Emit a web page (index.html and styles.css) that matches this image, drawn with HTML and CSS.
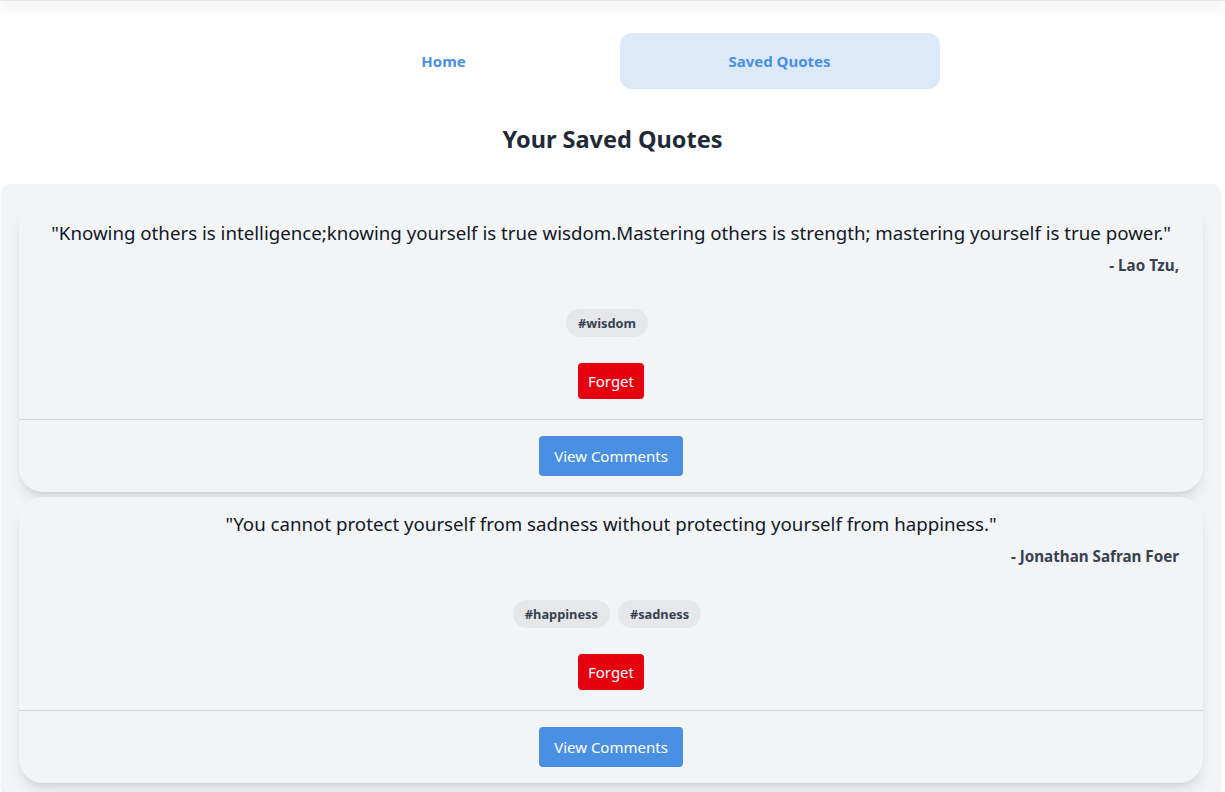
FILE: index.html
```html
<!DOCTYPE html>
<html lang="en">
<head>
<meta charset="utf-8">
<title>Saved Quotes</title>
<link rel="stylesheet" href="styles.css">
</head>
<body>
<header class="topbar"></header>
<nav class="nav">
  <a class="nav-btn" href="#">Home</a>
  <a class="nav-btn active" href="#">Saved Quotes</a>
</nav>
<h1 class="title">Your Saved Quotes</h1>
<main class="panel">
  <article class="card card-first">
    <p class="quote">"Knowing others is intelligence;knowing yourself is true wisdom.Mastering others is strength; mastering yourself is true power."</p>
    <p class="author">- Lao Tzu,</p>
    <div class="tags"><span class="tag">#wisdom</span></div>
    <div class="actions"><button class="btn-forget">Forget</button></div>
    <div class="card-foot"><button class="btn-comments">View Comments</button></div>
  </article>
  <article class="card">
    <p class="quote">"You cannot protect yourself from sadness without protecting yourself from happiness."</p>
    <p class="author">- Jonathan Safran Foer</p>
    <div class="tags"><span class="tag">#happiness</span><span class="tag">#sadness</span></div>
    <div class="actions"><button class="btn-forget">Forget</button></div>
    <div class="card-foot"><button class="btn-comments">View Comments</button></div>
  </article>
</main>
</body>
</html>
```

FILE: styles.css
```css
* { box-sizing: border-box; }
html, body { margin: 0; padding: 0; background: #ffffff; }
body {
  font-family: "Noto Sans", "Open Sans", sans-serif;
  color: #111827;
  overflow: hidden;
}
.topbar {
  height: 1px;
  background: #e5e7eb;
  box-shadow: 0 4px 12px 2px rgba(0,0,0,0.1);
}
.nav {
  display: flex;
  justify-content: center;
  gap: 16px;
  padding-top: 32px;
  margin-left: -2px;
}
.nav-btn {
  width: 320px;
  height: 56px;
  display: flex;
  align-items: center;
  justify-content: center;
  border-radius: 12px;
  color: #4a90e2;
  font-weight: 700;
  font-size: 15px;
  text-decoration: none;
}
.nav-btn.active { background: #dce9f8; }
.title {
  margin: 34px 0 29px;
  text-align: center;
  font-size: 23.5px;
  line-height: 32px;
  font-weight: 700;
  color: #1f2937;
}
.panel {
  margin-left: 2px;
  width: 1218px;
  background: #f3f4f6;
  border-radius: 8px;
  padding: 15px 17px 10px;
  display: flex;
  flex-direction: column;
  gap: 5px;
  box-shadow: 0 4px 6px -1px rgba(0,0,0,0.1), 0 2px 4px -2px rgba(0,0,0,0.1);
}
.card {
  background: #f3f4f6;
  border-radius: 24px;
  padding: 13px 0 16px;
  box-shadow: 0 10px 15px -3px rgba(0,0,0,0.1), 0 4px 6px -4px rgba(0,0,0,0.1);
}
.card-first { padding-top: 20px; }
.quote {
  margin: 0;
  padding: 0 16px;
  text-align: center;
  font-size: 18.7px;
  line-height: 28px;
  color: #111827;
}
.author {
  margin: 8px 0 0;
  padding: 0 24px;
  text-align: right;
  font-size: 15.2px;
  line-height: 20px;
  font-weight: 700;
  color: #374151;
}
.tags {
  margin-top: 34px;
  display: flex;
  justify-content: center;
}
.tag {
  height: 28px;
  display: inline-flex;
  align-items: center;
  padding: 0 12px;
  margin-right: 8px;
  border-radius: 9999px;
  background: #e5e7eb;
  color: #374151;
  font-size: 12.8px;
  font-weight: 700;
}
.actions {
  margin-top: 26px;
  display: flex;
  justify-content: center;
  padding-bottom: 20px;
  border-bottom: 1px solid #d1d5db;
}
.btn-forget {
  height: 36px;
  padding: 0 10px;
  border: 0;
  border-radius: 4px;
  background: #e6000f;
  color: #ffffff;
  font-family: inherit;
  font-size: 15px;
}
.card-foot {
  display: flex;
  justify-content: center;
  padding-top: 16px;
}
.btn-comments {
  height: 40px;
  padding: 0 15px;
  border: 0;
  border-radius: 4px;
  background: #4a90e2;
  color: #ffffff;
  font-family: inherit;
  font-size: 15px;
}
```
